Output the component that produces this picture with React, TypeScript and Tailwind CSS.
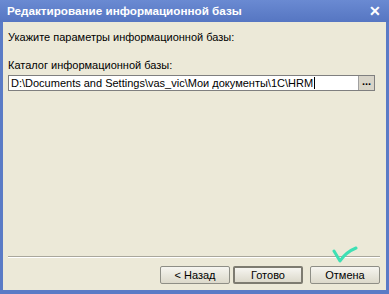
import React from "react";

export default function App() {
  const font = { fontFamily: '"Liberation Sans", Arial, sans-serif' };
  return (
    <div
      className="w-[389px] h-[294px] bg-[#5a7bc6] flex flex-col overflow-hidden"
      style={font}
    >
      <div className="h-[22px] flex items-center justify-between pl-[7px] pr-[8px] bg-gradient-to-b from-[#6a8ad2] to-[#5676c2]">
        <span className="text-white font-bold text-[11.7px] leading-none">
          Редактирование информационной базы
        </span>
        <span className="text-white font-bold text-[14px] leading-none">✕</span>
      </div>
      <div className="flex-1 mx-[3px] mb-[4px] bg-[#ece9d8] flex flex-col pl-[5px] pr-[6px] pb-[6px] text-[11px] leading-[14px] text-black">
        <div className="pt-[8px]">Укажите параметры информационной базы:</div>
        <div className="mt-[14px]">Каталог информационной базы:</div>
        <div className="mt-[3px] flex h-[16px] w-[367px] border border-[#7f7f7f] bg-white">
          <div className="flex-1 flex items-center pl-[2px] text-[11px] whitespace-nowrap">
            D:\Documents and Settings\vas_vic\Мои документы\1C\HRM
            <span className="inline-block w-[1px] h-[12px] bg-black ml-[1px]" />
          </div>
          <div className="w-[16px] bg-[#d8d4c8] border-l border-[#a0a0a0] flex items-start justify-center text-[11px] leading-[10px] font-bold">
            ...
          </div>
        </div>
        <div className="flex-1 relative">
          <svg
            className="absolute right-[22px] bottom-[-8px]"
            width="26"
            height="18"
            viewBox="0 0 26 18"
          >
            <path
              d="M2 5 L8 15 Q14 6 24 2"
              stroke="#3ee0b4"
              strokeWidth="3"
              fill="none"
              strokeLinecap="round"
              strokeLinejoin="round"
            />
          </svg>
        </div>
        <div className="h-[1px] bg-[#a9a79c] w-[372px]" />
        <div className="h-[1px] bg-white w-[372px]" />
        <div className="mt-[8px] flex justify-end">
          <button className="w-[70px] h-[18px] rounded-[2px] border border-[#8e8e86] bg-gradient-to-b from-[#f6f5f0] to-[#dcd9cb] text-[11px] leading-none flex items-center justify-center">
            &lt; Назад
          </button>
          <button className="ml-[3px] w-[70px] h-[18px] rounded-[2px] border-2 border-[#7d7b70] bg-gradient-to-b from-[#f6f5f0] to-[#dcd9cb] text-[11px] leading-none flex items-center justify-center">
            Готово
          </button>
          <button className="ml-[7px] w-[70px] h-[18px] rounded-[2px] border border-[#8e8e86] bg-gradient-to-b from-[#f6f5f0] to-[#dcd9cb] text-[11px] leading-none flex items-center justify-center">
            Отмена
          </button>
        </div>
      </div>
    </div>
  );
}
